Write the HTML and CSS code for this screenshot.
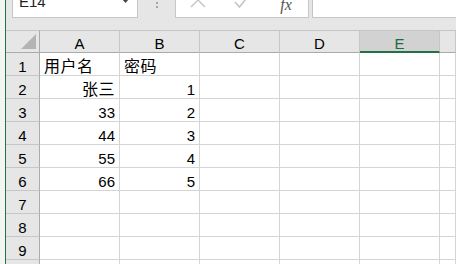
FILE: index.html
```html
<!DOCTYPE html>
<html lang="zh-CN">
<head>
    <meta charset="UTF-8">
    <meta name="viewport" content="width=device-width, initial-scale=1.0">
    <title>Sheet1</title>
    <link rel="stylesheet" href="styles.css">
</head>
<body>
    <div class="window">
        <div class="edge"></div>
        <div class="main">
            <div class="formula-bar">
                <div class="name-box">
                    <span class="cell-ref">E14</span>
                    <span class="drop-arrow"></span>
                </div>
                <div class="bar-dots"><i></i><i></i><i></i></div>
                <div class="bar-buttons">
                    <span class="bar-btn">
                        <svg width="16" height="16" viewBox="0 0 16 16"><path d="M1 0 L15 14 M15 0 L1 14" stroke="#c4c4c4" stroke-width="1.4" fill="none"/></svg>
                    </span>
                    <span class="bar-btn">
                        <svg width="16" height="16" viewBox="0 0 16 16"><path d="M1 9 L5.5 14 L15 2" stroke="#c4c4c4" stroke-width="1.6" fill="none"/></svg>
                    </span>
                    <span class="bar-btn fx">fx</span>
                </div>
                <div class="formula-input"></div>
            </div>

            <div class="sheet">
                <div class="row head">
                    <div class="cell corner"><span class="corner-mark"></span></div>
                    <div class="cell col-h">A</div>
                    <div class="cell col-h">B</div>
                    <div class="cell col-h">C</div>
                    <div class="cell col-h">D</div>
                    <div class="cell col-h active">E</div>
                    <div class="cell col-h"></div>
                </div>
                <div class="row">
                    <div class="cell row-h">1</div>
                    <div class="cell cjk">用户名</div>
                    <div class="cell cjk">密码</div>
                    <div class="cell"></div><div class="cell"></div><div class="cell"></div><div class="cell"></div>
                </div>
                <div class="row">
                    <div class="cell row-h">2</div>
                    <div class="cell cjk num">张三</div>
                    <div class="cell num">1</div>
                    <div class="cell"></div><div class="cell"></div><div class="cell"></div><div class="cell"></div>
                </div>
                <div class="row">
                    <div class="cell row-h">3</div>
                    <div class="cell num">33</div>
                    <div class="cell num">2</div>
                    <div class="cell"></div><div class="cell"></div><div class="cell"></div><div class="cell"></div>
                </div>
                <div class="row">
                    <div class="cell row-h">4</div>
                    <div class="cell num">44</div>
                    <div class="cell num">3</div>
                    <div class="cell"></div><div class="cell"></div><div class="cell"></div><div class="cell"></div>
                </div>
                <div class="row">
                    <div class="cell row-h">5</div>
                    <div class="cell num">55</div>
                    <div class="cell num">4</div>
                    <div class="cell"></div><div class="cell"></div><div class="cell"></div><div class="cell"></div>
                </div>
                <div class="row">
                    <div class="cell row-h">6</div>
                    <div class="cell num">66</div>
                    <div class="cell num">5</div>
                    <div class="cell"></div><div class="cell"></div><div class="cell"></div><div class="cell"></div>
                </div>
                <div class="row">
                    <div class="cell row-h">7</div>
                    <div class="cell"></div><div class="cell"></div><div class="cell"></div><div class="cell"></div><div class="cell"></div><div class="cell"></div>
                </div>
                <div class="row">
                    <div class="cell row-h">8</div>
                    <div class="cell"></div><div class="cell"></div><div class="cell"></div><div class="cell"></div><div class="cell"></div><div class="cell"></div>
                </div>
                <div class="row">
                    <div class="cell row-h">9</div>
                    <div class="cell"></div><div class="cell"></div><div class="cell"></div><div class="cell"></div><div class="cell"></div><div class="cell"></div>
                </div>
                <div class="row">
                    <div class="cell row-h"></div>
                    <div class="cell"></div><div class="cell"></div><div class="cell"></div><div class="cell"></div><div class="cell"></div><div class="cell"></div>
                </div>
            </div>
        </div>
    </div>
</body>
</html>
```

FILE: styles.css
```css
body {
    margin: 0;
    padding: 0;
    font-family: "Liberation Sans", "Noto Sans CJK SC", sans-serif;
    font-size: 15px;
    color: #000;
    background: #e6e6e6;
    overflow: hidden;
}

.window {
    display: flex;
    height: 264px;
    overflow: hidden;
}

.edge {
    width: 5px;
    flex-shrink: 0;
    background: #f4f4f4;
    border-right: 1px solid #217346;
}

.main {
    flex: 1;
    min-width: 0;
    overflow: hidden;
}

/* formula bar (top is cut off in the shot) */
.formula-bar {
    display: flex;
    height: 26px;
    margin: -8px 0 12px;
    padding-left: 6px;
}

.name-box {
    width: 126px;
    box-sizing: border-box;
    background: #fff;
    border: 1px solid #c6c6c6;
    display: flex;
    justify-content: space-between;
    align-items: flex-start;
    padding: 1px 8px 0 6px;
    line-height: 15px;
    color: #222;
}

.drop-arrow {
    width: 7px;
    height: 4px;
    margin-top: 5px;
    background: #444;
    clip-path: polygon(0 0, 100% 0, 50% 100%);
}

.bar-dots {
    width: 37px;
    display: flex;
    flex-direction: column;
    align-items: center;
    gap: 2px;
    padding-top: 6px;
}

.bar-dots i {
    width: 2px;
    height: 2px;
    border-radius: 1px;
    background: #8f8f8f;
}

.bar-buttons {
    display: flex;
    background: #fff;
    border: 1px solid #c6c6c6;
}

.bar-btn {
    width: 44px;
    display: flex;
    justify-content: center;
    align-items: flex-start;
}

.bar-btn.fx {
    font-family: "Liberation Serif", serif;
    font-style: italic;
    font-size: 16px;
    line-height: 15px;
    padding-top: 4px;
    color: #555;
}

.formula-input {
    flex: 1;
    margin-left: 3px;
    background: #fff;
    border: 1px solid #c6c6c6;
    border-right: none;
}

/* grid */
.sheet {
    display: flex;
    flex-direction: column;
}

.row {
    display: grid;
    grid-template-columns: 34px repeat(5, 80px) 1fr;
    height: 23px;
}

.cell {
    box-sizing: border-box;
    background: #fff;
    border-right: 1px solid #d4d4d4;
    border-bottom: 1px solid #d4d4d4;
    display: flex;
    align-items: flex-end;
    padding: 0 4px 1px;
    line-height: 15px;
    white-space: nowrap;
    overflow: hidden;
}

.cell.num {
    justify-content: flex-end;
}

.cell.cjk {
    font-size: 16px;
    letter-spacing: 0.5px;
}

.head .cell {
    background: #e6e6e6;
    border-top: 1px solid #c6c6c6;
    border-right-color: #c6c6c6;
    border-bottom-color: #ababab;
}

.col-h {
    justify-content: center;
}

.col-h.active {
    background: #d2d2d2;
    color: #1e6b41;
    border-bottom: 2px solid #217346;
    padding-bottom: 0;
}

.cell.row-h {
    background: #e6e6e6;
    justify-content: center;
    border-right-color: #ababab;
    border-bottom-color: #c6c6c6;
}

.head .corner {
    justify-content: flex-end;
    border-right-color: #ababab;
    padding: 0 3px 3px 0;
}

.corner-mark {
    width: 15px;
    height: 15px;
    background: #b4b4b4;
    clip-path: polygon(100% 0, 100% 100%, 0 100%);
}
```
